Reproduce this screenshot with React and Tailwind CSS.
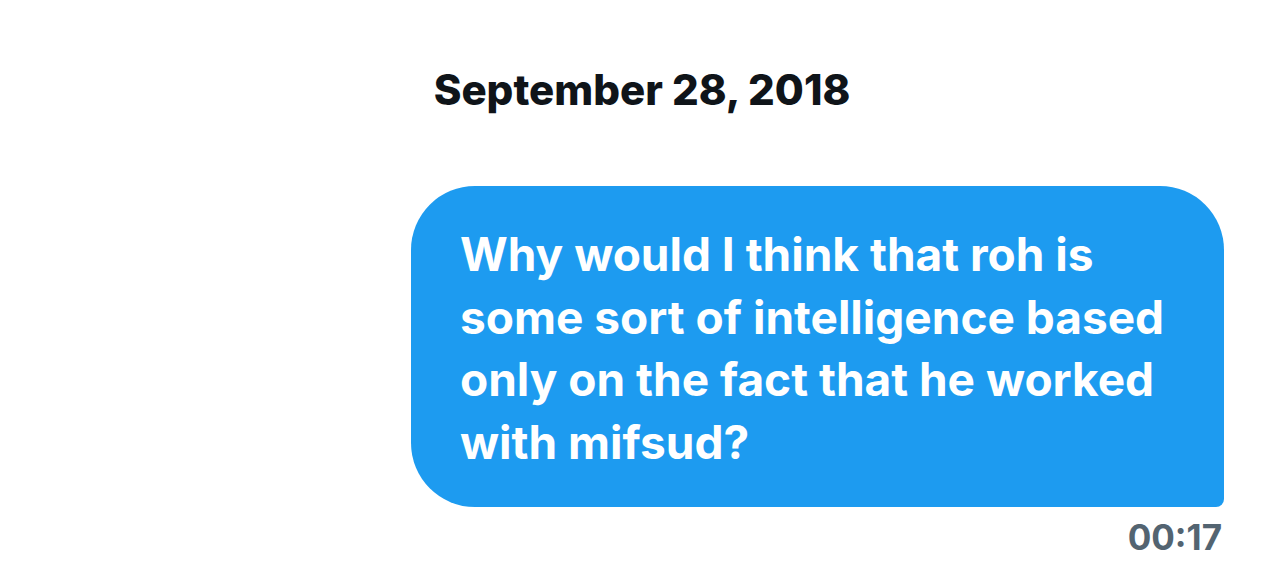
export default function App() {
  return (
    <div className="w-full h-[570px] bg-white flex flex-col" style={{ fontFamily: "Inter, 'Noto Sans', sans-serif" }}>
      <div className="pt-[65px] h-[186px] flex justify-center">
        <div className="text-[42px] leading-[50px] font-extrabold text-[#0f1419]">September 28, 2018</div>
      </div>
      <div className="self-end mr-[60px] w-[813px] bg-[#1d9bf0] rounded-[64px] rounded-br-[8px] pl-[49px] pr-[40px] pt-[37px] pb-[34px]">
        <p className="text-white font-bold text-[46px] leading-[62.5px]">
          Why would I think that roh is<br />some sort of intelligence based<br />only on the fact that he worked<br />with mifsud?
        </p>
      </div>
      <div className="self-end mr-[62px] mt-[11px] text-[#536471] font-bold text-[35px] leading-[38px]">00:17</div>
    </div>
  );
}
